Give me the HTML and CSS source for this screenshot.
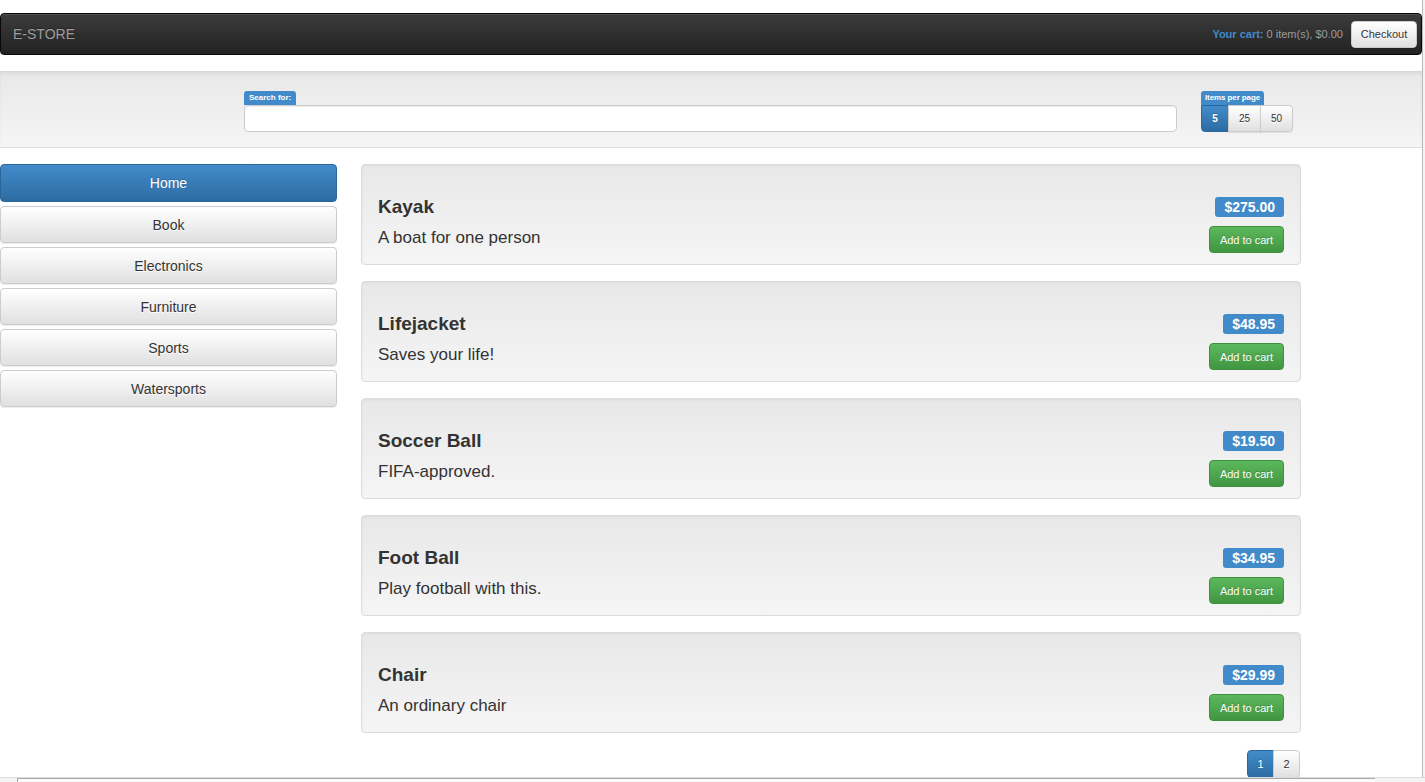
FILE: index.html
```html
<!DOCTYPE html>
<html lang="en">
<head>
<meta charset="utf-8">
<title>E-STORE</title>
<link rel="stylesheet" href="styles.css">
</head>
<body>
<div class="page">
  <nav class="navbar">
    <span class="brand">E-STORE</span>
    <div class="cart">
      <span class="cart-summary"><b class="cart-label">Your cart:</b> 0 item(s), $0.00</span>
      <button class="btn btn-default btn-checkout">Checkout</button>
    </div>
  </nav>

  <div class="well search-bar">
    <div class="field search-field">
      <span class="tag">Search for:</span>
      <input class="search-input" type="text">
    </div>
    <div class="field per-page">
      <span class="tag">Items per page</span>
      <div class="btn-group">
        <button class="btn btn-primary seg">5</button>
        <button class="btn btn-default seg">25</button>
        <button class="btn btn-default seg">50</button>
      </div>
    </div>
  </div>

  <div class="main">
    <aside class="categories">
      <button class="btn btn-primary cat cat-active">Home</button>
      <button class="btn btn-default cat">Book</button>
      <button class="btn btn-default cat">Electronics</button>
      <button class="btn btn-default cat">Furniture</button>
      <button class="btn btn-default cat">Sports</button>
      <button class="btn btn-default cat">Watersports</button>
    </aside>

    <section class="products">
      <div class="well product">
        <div class="prow"><h4 class="pname">Kayak</h4><span class="price">$275.00</span></div>
        <div class="prow"><p class="pdesc">A boat for one person</p><button class="btn btn-success add">Add to cart</button></div>
      </div>
      <div class="well product">
        <div class="prow"><h4 class="pname">Lifejacket</h4><span class="price">$48.95</span></div>
        <div class="prow"><p class="pdesc">Saves your life!</p><button class="btn btn-success add">Add to cart</button></div>
      </div>
      <div class="well product">
        <div class="prow"><h4 class="pname">Soccer Ball</h4><span class="price">$19.50</span></div>
        <div class="prow"><p class="pdesc">FIFA-approved.</p><button class="btn btn-success add">Add to cart</button></div>
      </div>
      <div class="well product">
        <div class="prow"><h4 class="pname">Foot Ball</h4><span class="price">$34.95</span></div>
        <div class="prow"><p class="pdesc">Play football with this.</p><button class="btn btn-success add">Add to cart</button></div>
      </div>
      <div class="well product">
        <div class="prow"><h4 class="pname">Chair</h4><span class="price">$29.99</span></div>
        <div class="prow"><p class="pdesc">An ordinary chair</p><button class="btn btn-success add">Add to cart</button></div>
      </div>

      <div class="pager">
        <button class="btn btn-primary pg">1</button>
        <button class="btn btn-default pg">2</button>
      </div>
    </section>
  </div>
</div>
<div class="vscroll"></div>
<div class="hscroll"><div class="hthumb"></div></div>
</body>
</html>
```

FILE: styles.css
```css
* { box-sizing: border-box; }

html, body {
  margin: 0;
  padding: 0;
  background: #fff;
  overflow: hidden;
}

body {
  font-family: "Liberation Sans", Arial, sans-serif;
  font-size: 14px;
  color: #333;
}

.page {
  width: 1422px;
  padding-top: 13px;
}

/* ---------- buttons ---------- */
.btn {
  font-family: "Liberation Sans", Arial, sans-serif;
  display: inline-flex;
  align-items: center;
  justify-content: center;
  border: 1px solid #ccc;
  border-radius: 4px;
  cursor: pointer;
  padding: 0;
  margin: 0;
}

.btn-default {
  color: #333;
  background: linear-gradient(to bottom, #fff 0%, #e0e0e0 100%);
  border-color: #ccc;
  text-shadow: 0 1px 0 #fff;
  box-shadow: inset 0 1px 0 rgba(255,255,255,.15), 0 1px 1px rgba(0,0,0,.075);
}

.btn-primary {
  color: #fff;
  background: linear-gradient(to bottom, #428bca 0%, #2d6ca2 100%);
  border-color: #2b669a;
  text-shadow: 0 -1px 0 rgba(0,0,0,.2);
}

.btn-success {
  color: #fff;
  background: linear-gradient(to bottom, #5cb85c 0%, #419641 100%);
  border-color: #3e8f3e;
  text-shadow: 0 -1px 0 rgba(0,0,0,.2);
}

/* ---------- navbar ---------- */
.navbar {
  height: 42px;
  display: flex;
  align-items: center;
  justify-content: space-between;
  padding: 0 4px 0 12px;
  background: linear-gradient(to bottom, #3c3c3c 0%, #222 100%);
  border: 1px solid #080808;
  border-radius: 4px;
  box-shadow: inset 0 1px 0 rgba(255,255,255,.1);
}

.brand {
  color: #9d9d9d;
  font-size: 14px;
  text-shadow: 0 -1px 0 rgba(0,0,0,.25);
}

.cart {
  display: flex;
  align-items: center;
  gap: 8px;
}

.cart-summary {
  color: #9d9d9d;
  font-size: 11px;
}

.cart-label {
  color: #428bca;
  font-weight: bold;
}

.btn-checkout {
  height: 27px;
  width: 66px;
  font-size: 11px;
}

/* ---------- well ---------- */
.well {
  background: linear-gradient(to bottom, #e8e8e8 0%, #f5f5f5 100%);
  border: 1px solid #dcdcdc;
  border-radius: 4px;
  box-shadow: inset 0 1px 3px rgba(0,0,0,.05), 0 1px 0 rgba(255,255,255,.1);
}

.search-bar {
  margin-top: 16px;
  height: 77px;
  border-radius: 0;
  border-left: none;
  border-right: none;
  border-top-color: #d8d8d8;
  border-bottom-color: #ddd;
  box-shadow: inset 0 2px 3px rgba(0,0,0,.06);
  display: flex;
  align-items: flex-start;
  padding: 19px 0 0 244px;
  gap: 24px;
}

.field {
  display: flex;
  flex-direction: column;
  align-items: flex-start;
}

.tag {
  display: inline-block;
  background: #428bca;
  color: #fff;
  font-size: 8px;
  font-weight: bold;
  line-height: 13px;
  height: 14px;
  padding: 0 5px;
  border-radius: 3px 3px 0 0;
}

.search-input {
  width: 933px;
  height: 27px;
  border: 1px solid #ccc;
  border-radius: 4px;
  background: #fff;
  box-shadow: inset 0 1px 1px rgba(0,0,0,.075);
  margin: 0;
}

.per-page .tag {
  padding: 0 4px;
  letter-spacing: -0.1px;
}

.btn-group {
  display: flex;
}

.seg {
  height: 27px;
  font-size: 10px;
  border-radius: 0;
}

.seg:first-child {
  width: 28px;
  border-radius: 0 0 0 4px;
  font-weight: bold;
}

.seg:nth-child(2) { width: 33px; margin-left: -1px; }
.seg:last-child { width: 33px; margin-left: -1px; border-radius: 0 4px 4px 0; }

/* ---------- main ---------- */
.main {
  display: flex;
  align-items: flex-start;
  gap: 24px;
  margin-top: 16px;
}

.categories {
  width: 337px;
  display: flex;
  flex-direction: column;
  gap: 4px;
}

.cat {
  height: 37px;
  width: 100%;
  font-size: 14px;
}

.cat-active {
  height: 38px;
}

.products {
  width: 940px;
  display: flex;
  flex-direction: column;
  gap: 17px;
}

.product {
  height: 101px;
  padding: 32px 16px 0 16px;
  display: flex;
  flex-direction: column;
  gap: 9px;
}

.product + .product {
  margin-top: -1px;
}

.prow {
  display: flex;
  justify-content: space-between;
  align-items: center;
}

.prow:first-child { height: 20px; }
.prow:last-child { height: 27px; }

.pname {
  margin: 0;
  font-size: 19px;
  font-weight: bold;
  color: #333;
  line-height: 20px;
}

.pdesc {
  margin: 0 0 4px 0;
  font-size: 17px;
  color: #333;
  line-height: 20px;
}

.price {
  background: #428bca;
  color: #fff;
  font-size: 14px;
  font-weight: bold;
  line-height: 20px;
  height: 20px;
  padding: 0 9px;
  border-radius: 3px;
}

.add {
  height: 27px;
  width: 75px;
  font-size: 11px;
}

.pager {
  display: flex;
  justify-content: flex-end;
  padding-right: 1px;
}

.pg {
  height: 28px;
  width: 27px;
  font-size: 11px;
}

.pg:first-child { border-radius: 4px 0 0 4px; }
.pg:last-child { border-radius: 0 4px 4px 0; margin-left: -1px; }

/* ---------- scrollbar remnants (overlay) ---------- */
.vscroll {
  position: fixed;
  top: 0;
  right: 0;
  bottom: 5px;
  width: 3px;
  border-left: 1px solid #b9b9b9;
  background: #f4f4f4;
}

.hscroll {
  position: fixed;
  left: 0;
  right: 0;
  bottom: 0;
  height: 5px;
  border-top: 1px solid #dcdcdc;
  background: #f4f4f4;
}

.hthumb {
  margin-left: 17px;
  width: 1358px;
  height: 4px;
  border-top: 1px solid #a8a8a8;
  border-left: 1px solid #a8a8a8;
  background: #fafafa;
}
```
